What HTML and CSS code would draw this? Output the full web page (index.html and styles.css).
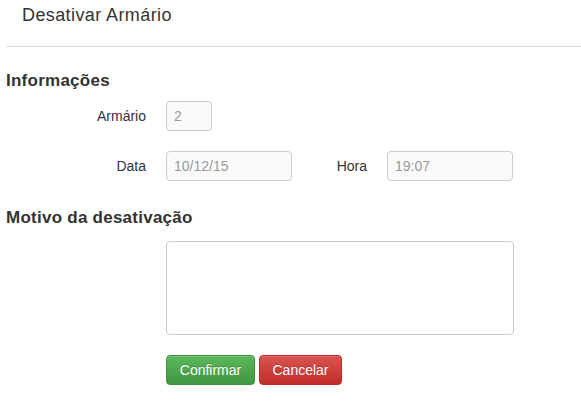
FILE: index.html
```html
<!DOCTYPE html>
<html lang="pt">
<head>
<meta charset="utf-8">
<title>Desativar Armário</title>
<link rel="stylesheet" href="styles.css">
</head>
<body>
<div class="page">
  <h1 class="title">Desativar Armário</h1>
  <div class="rule"></div>
  <h2 class="section">Informações</h2>
  <div class="row">
    <label class="label">Armário</label>
    <input class="field field-xs" type="text" value="2" disabled>
  </div>
  <div class="row row-2">
    <label class="label">Data</label>
    <input class="field field-md" type="text" value="10/12/15" disabled>
    <label class="label label-sm">Hora</label>
    <input class="field field-md" type="text" value="19:07" disabled>
  </div>
  <h2 class="section section-2">Motivo da desativação</h2>
  <div class="row row-text">
    <div class="spacer"></div>
    <textarea class="area"></textarea>
  </div>
  <div class="row row-actions">
    <div class="spacer"></div>
    <div class="actions">
      <button class="btn btn-success" type="button">Confirmar</button>
      <button class="btn btn-danger" type="button">Cancelar</button>
    </div>
  </div>
</div>
</body>
</html>
```

FILE: styles.css
```css
html, body {
  margin: 0;
  padding: 0;
  background: #fff;
}
body {
  font-family: "Liberation Sans", Arial, sans-serif;
  font-size: 14px;
  color: #333;
}
.page {
  padding-left: 6px;
}
.title {
  margin: 0;
  padding: 5px 0 0 16px;
  font-size: 18px;
  font-weight: normal;
  line-height: 20px;
  letter-spacing: 0.4px;
  color: #333;
}
.rule {
  margin-top: 21px;
  border-top: 1px solid #d9d9d9;
}
.section {
  margin: 24px 0 0 0;
  font-size: 17px;
  font-weight: bold;
  line-height: 20px;
  letter-spacing: 0.25px;
  color: #333;
}
.section-2 {
  margin-top: 27px;
}
.row {
  display: flex;
  align-items: center;
  margin-top: 10px;
}
.row-2 {
  margin-top: 20px;
}
.row-text {
  margin-top: 13px;
}
.row-actions {
  margin-top: 20px;
}
.label {
  width: 140px;
  margin-right: 20px;
  text-align: right;
  font-size: 14px;
  color: #333;
}
.label-sm {
  width: 75px;
}
.spacer {
  width: 160px;
  flex: none;
}
.field {
  box-sizing: border-box;
  height: 30px;
  padding: 0 7px;
  border: 1px solid #ccc;
  border-radius: 4px;
  background: #fafafa;
  color: #999;
  font-family: "Liberation Sans", Arial, sans-serif;
  font-size: 14px;
  margin: 0;
}
.field-xs {
  width: 46px;
}
.field-md {
  width: 126px;
}
.area {
  box-sizing: border-box;
  width: 348px;
  height: 94px;
  border: 1px solid #ccc;
  border-radius: 4px;
  background: #fff;
  resize: none;
  margin: 0;
  padding: 6px;
  font-family: "Liberation Sans", Arial, sans-serif;
  font-size: 14px;
  display: block;
}
.actions {
  display: flex;
  gap: 4px;
}
.btn {
  box-sizing: border-box;
  height: 30px;
  padding: 0 12px;
  border-radius: 4px;
  border: 1px solid transparent;
  font-family: "Liberation Sans", Arial, sans-serif;
  font-size: 14px;
  color: #fff;
  text-shadow: 0 -1px 0 rgba(0, 0, 0, 0.2);
  box-shadow: inset 0 1px 0 rgba(255, 255, 255, 0.15), 0 1px 1px rgba(0, 0, 0, 0.075);
  cursor: pointer;
}
.btn-success {
  width: 89px;
  background: linear-gradient(to bottom, #5cb85c 0%, #419641 100%);
  border-color: #3e8f3e;
}
.btn-danger {
  width: 83px;
  background: linear-gradient(to bottom, #d9534f 0%, #c12e2a 100%);
  border-color: #b92c28;
}
```
